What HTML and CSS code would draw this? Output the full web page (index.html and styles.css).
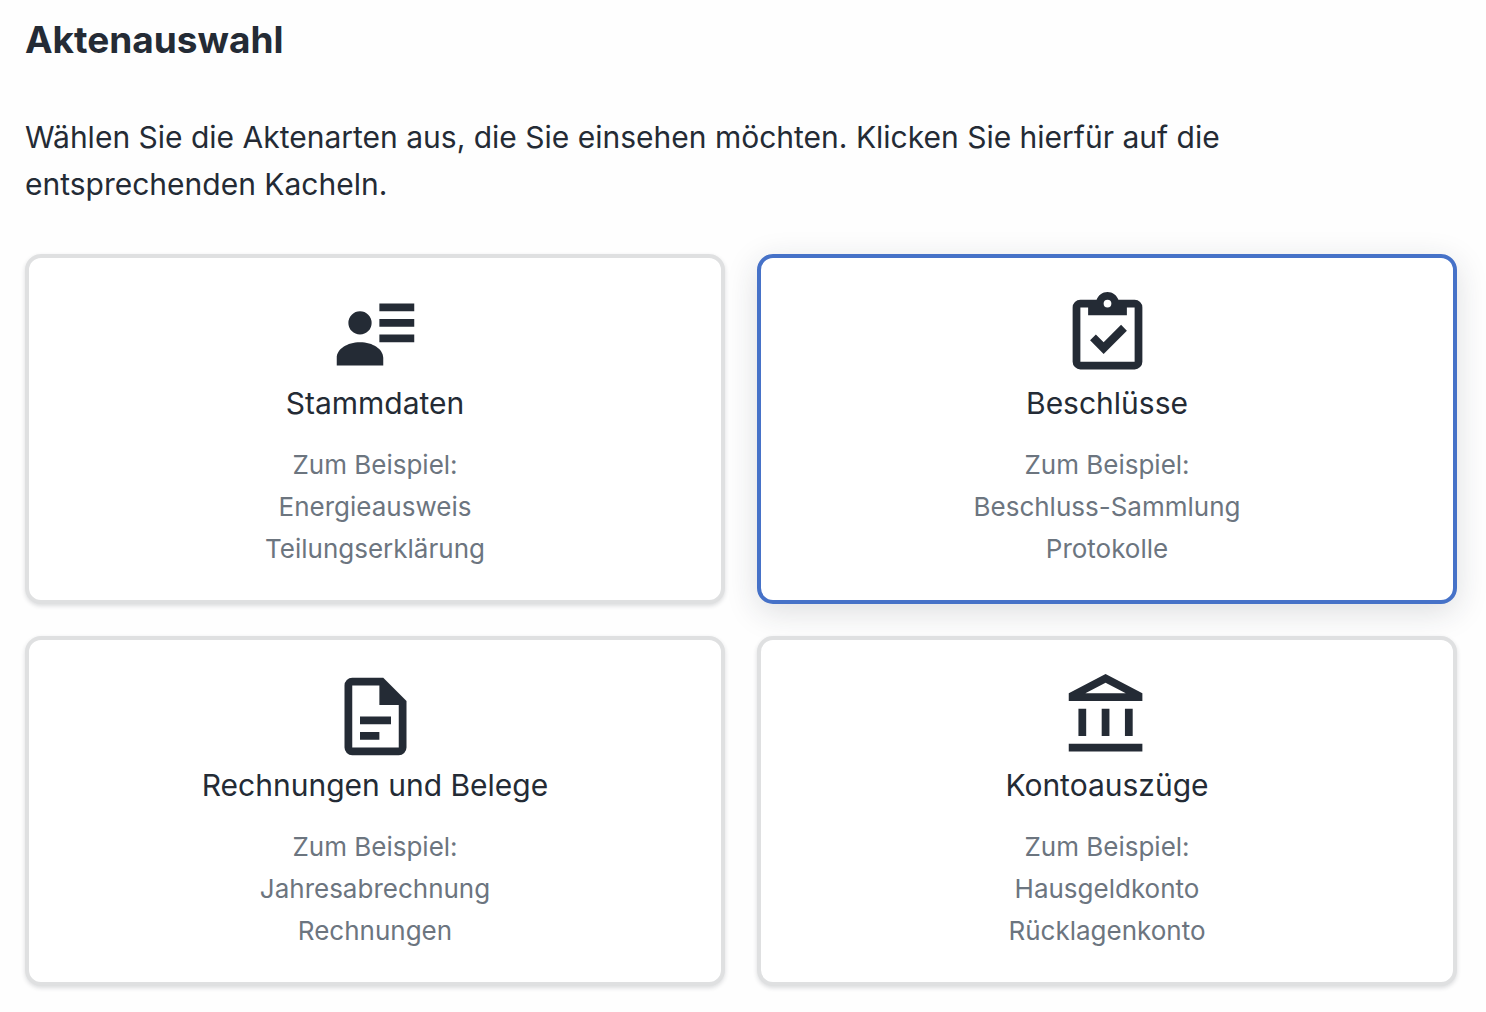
FILE: index.html
```html
<!DOCTYPE html>
<html lang="de">
<head>
  <meta charset="UTF-8">
  <meta name="viewport" content="width=device-width, initial-scale=1">
  <title>Aktenauswahl</title>
  <link rel="stylesheet" href="styles.css">
</head>
<body>
  <main class="page">
    <h1>Aktenauswahl</h1>
    <p class="intro">Wählen Sie die Aktenarten aus, die Sie einsehen möchten. Klicken Sie hierfür auf die entsprechenden Kacheln.</p>

    <div class="tiles">
      <button type="button" class="tile" aria-pressed="false">
        <svg class="icon" viewBox="0 0 24 24" aria-hidden="true">
          <path d="M13 4h9v2h-9zM13 8h9v2h-9zM13 12h9v2h-9zM8 6a3 3 0 1 1 0 6 3 3 0 0 1 0-6zM14 20H2v-2c0-2.21 2.69-4 6-4s6 1.79 6 4z"/>
        </svg>
        <span class="tile-title">Stammdaten</span>
        <span class="tile-text">Zum Beispiel:<br>Energieausweis<br>Teilungserklärung</span>
      </button>

      <button type="button" class="tile selected" aria-pressed="true">
        <svg class="icon" viewBox="0 0 24 24" aria-hidden="true">
          <path d="M19 3h-4.18C14.4 1.84 13.3 1 12 1s-2.4.84-2.82 2H5a2 2 0 0 0-2 2v14a2 2 0 0 0 2 2h14a2 2 0 0 0 2-2V5a2 2 0 0 0-2-2m-7 0a1 1 0 1 1 0 2 1 1 0 0 1 0-2M7 7h10V5h2v14H5V5h2zM7.5 13.5 9 12l2 2 4.5-4.5L17 11l-6 6z"/>
        </svg>
        <span class="tile-title">Beschlüsse</span>
        <span class="tile-text">Zum Beispiel:<br>Beschluss-Sammlung<br>Protokolle</span>
      </button>

      <button type="button" class="tile" aria-pressed="false">
        <svg class="icon" viewBox="0 0 24 24" aria-hidden="true">
          <path d="M6 2a2 2 0 0 0-2 2v16a2 2 0 0 0 2 2h12a2 2 0 0 0 2-2V8l-6-6zm0 2h7v5h5v11H6zM8 12v2h8v-2zM8 16v2h5v-2z"/>
        </svg>
        <span class="tile-title">Rechnungen und Belege</span>
        <span class="tile-text">Zum Beispiel:<br>Jahresabrechnung<br>Rechnungen</span>
      </button>

      <button type="button" class="tile" aria-pressed="false">
        <svg class="icon" viewBox="0 0 24 24" aria-hidden="true">
          <path d="M6.5 10h-2v7h2zM12.5 10h-2v7h2zM21 19H2v2h19zM18.5 10h-2v7h2zM11.5 3.26 16.71 6H6.29zM11.5 1 2 6v2h19V6z"/>
        </svg>
        <span class="tile-title">Kontoauszüge</span>
        <span class="tile-text">Zum Beispiel:<br>Hausgeldkonto<br>Rücklagenkonto</span>
      </button>
    </div>
  </main>

  <script>
    document.querySelectorAll('.tile').forEach(function(tile) {
      tile.addEventListener('click', function() {
        const on = tile.classList.toggle('selected');
        tile.setAttribute('aria-pressed', on);
      });
    });
  </script>
</body>
</html>
```
FILE: styles.css
```css
* {
  box-sizing: border-box;
}

body {
  margin: 0;
  font-family: Inter, "Liberation Sans", sans-serif;
  color: #242b35;
  background-color: #fefefe;
}

.page {
  padding: 12px 29px 24px 25px;
}

h1 {
  margin: 0 0 46px;
  font-size: 37px;
  line-height: 56px;
  font-weight: 700;
}

.intro {
  margin: 0 0 46px;
  font-size: 30px;
  line-height: 47px;
}

.tiles {
  display: grid;
  grid-template-columns: 1fr 1fr;
  gap: 32px;
}

.tile {
  display: flex;
  flex-direction: column;
  align-items: center;
  padding: 30px 24px;
  border: 4px solid #dfe0e1;
  border-radius: 16px;
  background-color: #fff;
  box-shadow: 0 2px 4px rgba(36, 43, 53, 0.16);
  font-family: inherit;
  color: inherit;
  text-align: center;
  cursor: pointer;
}

.tile.selected {
  border-color: #4672c8;
  box-shadow: 0 8px 32px rgba(36, 43, 53, 0.15);
}

.icon {
  width: 93px;
  height: 93px;
  fill: #242b35;
  fill-rule: evenodd;
}

.tile-title {
  margin-bottom: 19px;
  font-size: 30px;
  line-height: 44px;
}

.tile-text {
  font-size: 26px;
  line-height: 42px;
  color: #6c757f;
}
```
